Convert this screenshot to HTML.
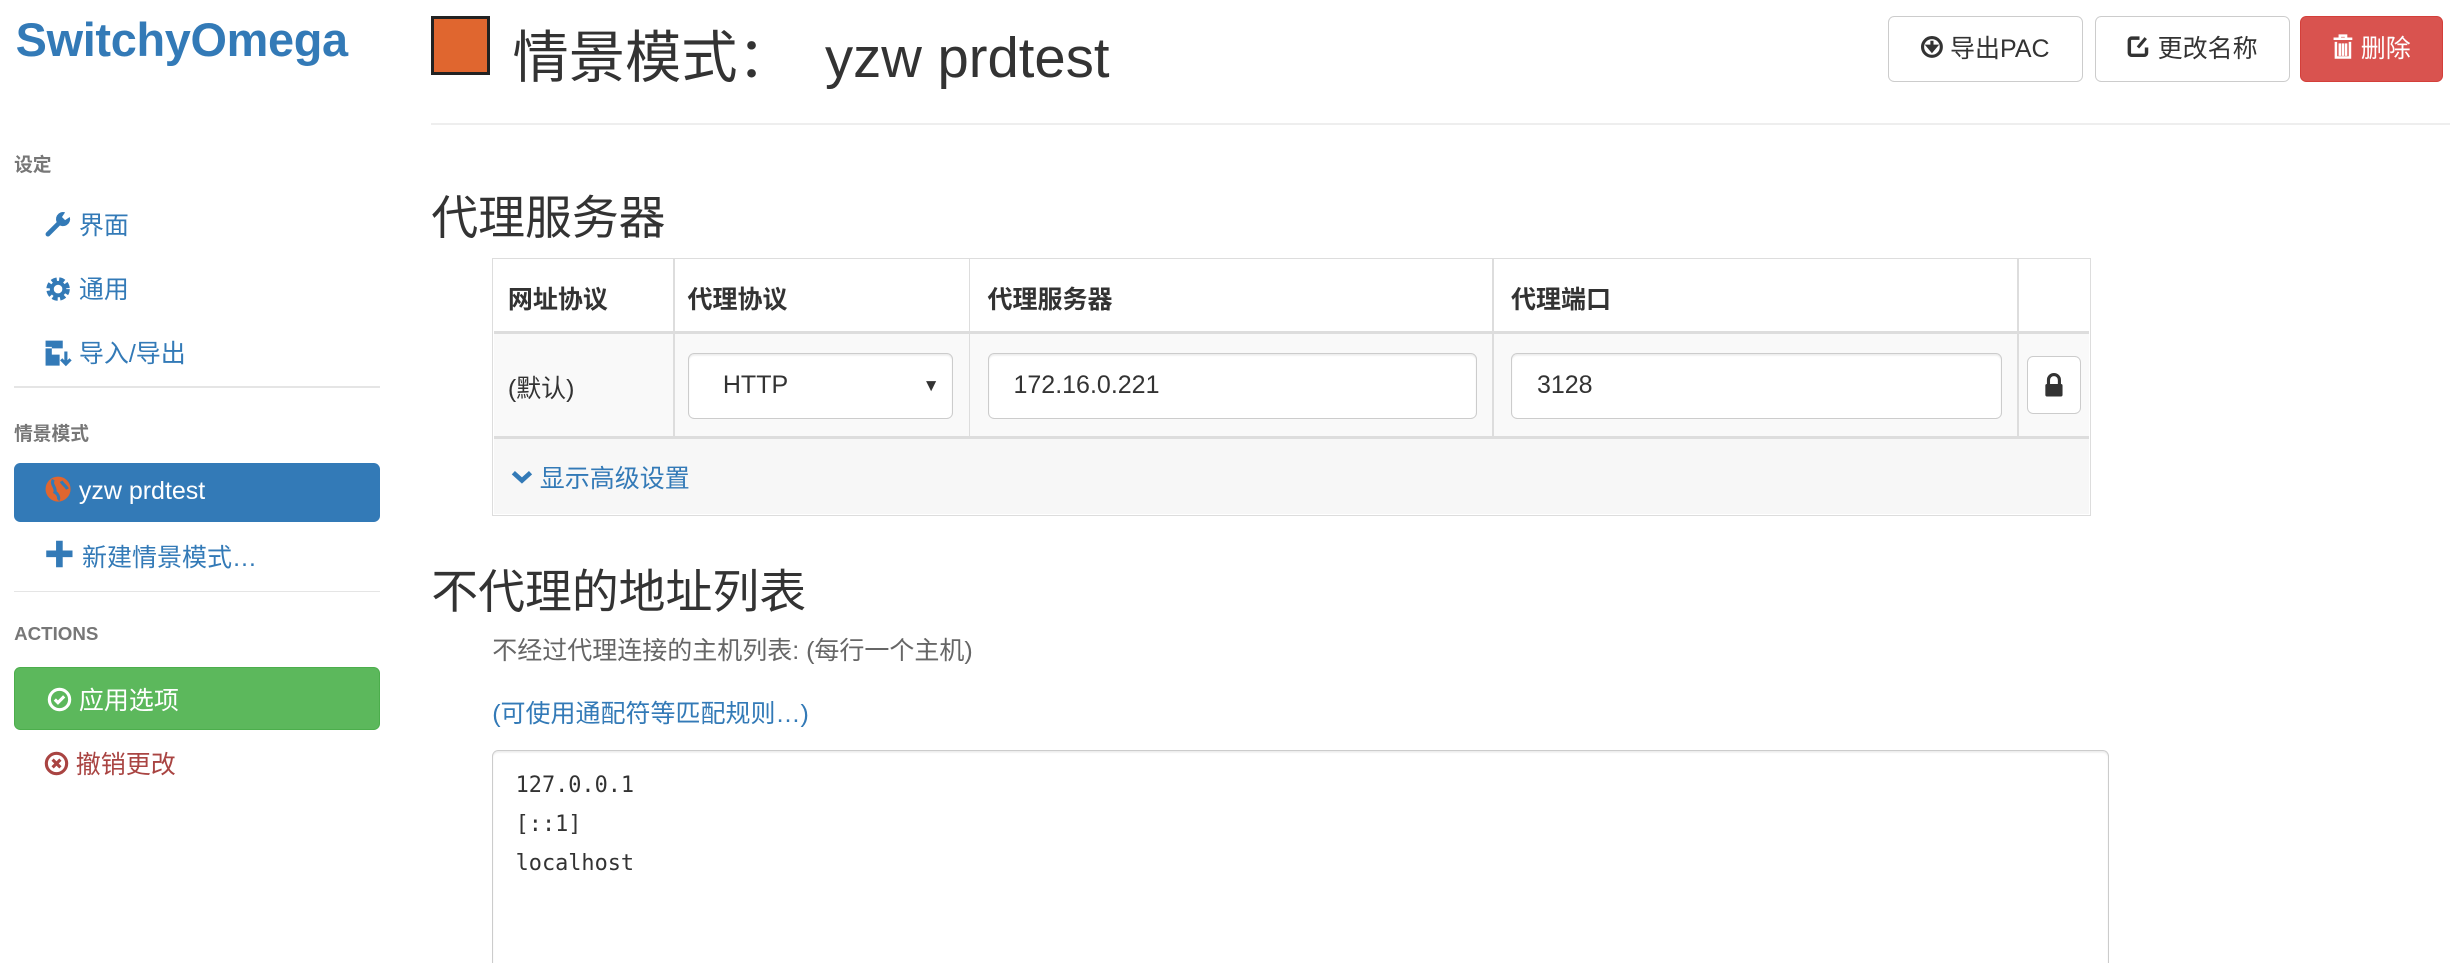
<!DOCTYPE html>
<html><head><meta charset="utf-8">
<style>
html{zoom:1.5625;overflow:hidden;height:616px}
body{margin:0;width:1568px;height:616px;overflow:hidden;background:#fff;font-family:"Liberation Sans","Noto Sans CJK SC",sans-serif;color:#333;position:relative}
.a{position:absolute;white-space:nowrap}
.blue{color:#337ab7}
.nh{font-size:12px;font-weight:bold;color:#777}
.ni{font-size:16px;color:#337ab7}
.hr{position:absolute;height:1px;background:#e5e5e5}
.btn{position:absolute;top:10px;height:41px;border:1px solid #ccc;border-radius:4px;background:#fff;font-size:16px;line-height:41px;text-align:center;box-sizing:content-box}
.ic{display:inline-block;vertical-align:middle;position:relative;top:-2px}
.inp{position:absolute;background:#fff;border:1px solid #ccc;border-radius:4px;box-shadow:inset 0 1px 1px rgba(0,0,0,.075);font-size:16px;line-height:40px;padding-left:16px;box-sizing:border-box}
.vl{position:absolute;width:1px;background:#ddd}
</style></head><body>
<div class="a blue" style="left:10px;top:8px;font-size:30px;font-weight:bold;letter-spacing:-0.2px">SwitchyOmega</div>

<div class="a nh" style="left:9px;top:96px">设定</div>
<div class="a ni" style="left:28px;top:132px"><svg class="ic" width="18" height="18" viewBox="0 0 18 18"><path d="M2.5 15.5 L10 8" stroke="#337ab7" stroke-width="3" stroke-linecap="round"/><path d="M9 9 A4.5 4.5 0 0 1 13.5 1.5 L11.5 4.5 L13.5 6.5 L16.5 4.5 A4.5 4.5 0 0 1 9 9Z" fill="#337ab7"/></svg> 界面</div>
<div class="a ni" style="left:28px;top:173px"><svg class="ic" width="18" height="18" viewBox="0 0 18 18"><circle cx="9" cy="9" r="5.5" fill="none" stroke="#337ab7" stroke-width="4" stroke-dasharray="3 1.4"/><circle cx="9" cy="9" r="4" fill="none" stroke="#337ab7" stroke-width="2.5"/></svg> 通用</div>
<div class="a ni" style="left:28px;top:214px"><svg class="ic" width="18" height="18" viewBox="0 0 18 18"><path d="M1 1h11v5H1z M1 1v16h9v-7H5V5H1z" fill="#337ab7"/><path d="M14 8v8 M11 13l3 3 3-3" stroke="#337ab7" stroke-width="2" fill="none"/></svg> 导入/导出</div>
<div class="hr" style="left:9px;top:247px;width:234px"></div>
<div class="a nh" style="left:9px;top:268px">情景模式</div>
<div class="a" style="left:9px;top:296px;width:234px;height:38px;background:#337ab7;border-radius:4px"></div>
<div class="a" style="left:28px;top:305px;font-size:16px;color:#fff"><svg class="ic" width="18" height="18" viewBox="0 0 18 18"><circle cx="9" cy="9" r="8" fill="#e0662f"/><path d="M6 3 C4 6 8 8 7 11 C9 12 10 15 9 16 M11 4 C12 6 14 7 15 9" stroke="#337ab7" stroke-width="2" fill="none"/></svg> yzw prdtest</div>
<div class="a ni" style="left:28px;top:344px"><span style="font-weight:bold;font-size:20px;line-height:16px">✚</span> 新建情景模式…</div>
<div class="hr" style="left:9px;top:378px;width:234px"></div>
<div class="a nh" style="left:9px;top:399px">ACTIONS</div>
<div class="a" style="left:9px;top:427px;width:234px;height:40px;background:#5cb85c;border:1px solid #4cae4c;border-radius:4px;box-sizing:border-box"></div>
<div class="a" style="left:30px;top:436px;font-size:16px;color:#fff"><svg class="ic" width="16" height="16" viewBox="0 0 16 16"><circle cx="8" cy="8" r="6.5" fill="none" stroke="#fff" stroke-width="2"/><path d="M5 8l2 2 4-4" stroke="#fff" stroke-width="2" fill="none"/></svg> 应用选项</div>
<div class="a" style="left:28px;top:477px;font-size:16px;color:#a94442"><svg class="ic" width="16" height="16" viewBox="0 0 16 16"><circle cx="8" cy="8" r="6.5" fill="none" stroke="#a94442" stroke-width="2"/><path d="M5.5 5.5l5 5M10.5 5.5l-5 5" stroke="#a94442" stroke-width="2"/></svg> 撤销更改</div>

<div class="a" style="left:276px;top:10px;width:34px;height:34px;background:#e0662f;border:2px solid #222"></div>
<div class="a" style="left:328px;top:8px;font-size:36px;color:#333">情景模式：&nbsp;&nbsp;yzw prdtest</div>
<div class="hr" style="left:276px;top:79px;width:1292px;background:#eee"></div>

<div class="btn" style="left:1208px;width:124px"><svg class="ic" width="14" height="14" viewBox="0 0 14 14"><circle cx="7" cy="7" r="6" fill="none" stroke="#333" stroke-width="2"/><path d="M7 3v5M4.5 6.5 7 9.5 9.5 6.5z" stroke="#333" stroke-width="2" fill="#333"/></svg> 导出PAC</div>
<div class="btn" style="left:1341px;width:123px"><svg class="ic" width="15" height="15" viewBox="0 0 15 15"><path d="M8 2H3a1.5 1.5 0 0 0-1.5 1.5v8A1.5 1.5 0 0 0 3 13h8a1.5 1.5 0 0 0 1.5-1.5V8" stroke="#333" stroke-width="2.2" fill="none"/><path d="M7 8l5-6" stroke="#333" stroke-width="2"/></svg> 更改名称</div>
<div class="btn" style="left:1472px;width:90px;background:#d9534f;border-color:#d43f3a;color:#fff"><svg class="ic" width="14" height="16" viewBox="0 0 14 16"><path d="M1 3h12M5 3V1h4v2M2.5 5v10h9V5M5 6v8M7 6v8M9 6v8" stroke="#fff" stroke-width="1.6" fill="none"/></svg> 删除</div>

<div class="a" style="left:276px;top:116px;font-size:30px;color:#333">代理服务器</div>
<div class="a" style="left:315px;top:165px;width:1023px;height:165px;border:1px solid #ddd;box-sizing:border-box"></div>
<div class="a" style="left:316px;top:213px;width:1021px;height:67px;background:#f9f9f9"></div>
<div class="a" style="left:316px;top:281px;width:1021px;height:48px;background:#f7f7f7"></div>
<div class="a" style="left:316px;top:212px;width:1021px;height:2px;background:#ddd"></div>
<div class="a" style="left:316px;top:279px;width:1021px;height:2px;background:#ddd"></div>
<div class="vl" style="left:431px;top:165px;height:115px"></div>
<div class="vl" style="left:620px;top:165px;height:115px"></div>
<div class="vl" style="left:955px;top:165px;height:115px"></div>
<div class="vl" style="left:1291px;top:165px;height:115px"></div>
<div class="a" style="left:325px;top:179px;font-size:16px;font-weight:bold">网址协议</div>
<div class="a" style="left:440px;top:179px;font-size:16px;font-weight:bold">代理协议</div>
<div class="a" style="left:632px;top:179px;font-size:16px;font-weight:bold">代理服务器</div>
<div class="a" style="left:967px;top:179px;font-size:16px;font-weight:bold">代理端口</div>
<div class="a" style="left:325px;top:236px;font-size:16px">(默认)</div>
<div class="inp" style="left:440px;top:226px;width:170px;height:42px;padding-left:22px">HTTP<span style="position:absolute;right:8px;font-size:11px">▼</span></div>
<div class="inp" style="left:632px;top:226px;width:313px;height:42px">172.16.0.221</div>
<div class="inp" style="left:967px;top:226px;width:314px;height:42px">3128</div>
<div class="a" style="left:1297px;top:228px;width:35px;height:37px;border:1px solid #ccc;border-radius:4px;background:#fff;box-sizing:border-box"><svg style="position:absolute;left:10px;top:10px" width="14" height="16" viewBox="0 0 14 16"><path d="M3.5 7V4.5a3.5 3.5 0 0 1 7 0V7" stroke="#333" stroke-width="2" fill="none"/><rect x="1.5" y="7" width="11" height="8" rx="1" fill="#333"/></svg></div>
<div class="a ni" style="left:327px;top:294px"><svg class="ic" width="14" height="12" viewBox="0 0 14 12"><path d="M1.5 3l5.5 5 5.5-5" stroke="#337ab7" stroke-width="3" fill="none"/></svg> 显示高级设置</div>

<div class="a" style="left:276px;top:355px;font-size:30px;color:#333">不代理的地址列表</div>
<div class="a" style="left:315px;top:404px;font-size:16px;color:#666">不经过代理连接的主机列表: (每行一个主机)</div>
<div class="a ni" style="left:315px;top:444px">(可使用通配符等匹配规则…)</div>
<div class="a" style="left:315px;top:480px;width:1035px;height:145px;border:1px solid #ccc;border-bottom:none;border-radius:4px 4px 0 0;box-shadow:inset 0 1px 1px rgba(0,0,0,.075);box-sizing:border-box"></div>
<div class="a" style="left:330px;top:490px;font-family:'DejaVu Sans Mono','Liberation Mono',monospace;font-size:14px;line-height:25px;color:#333">127.0.0.1<br>[::1]<br>localhost</div>
</body></html>
